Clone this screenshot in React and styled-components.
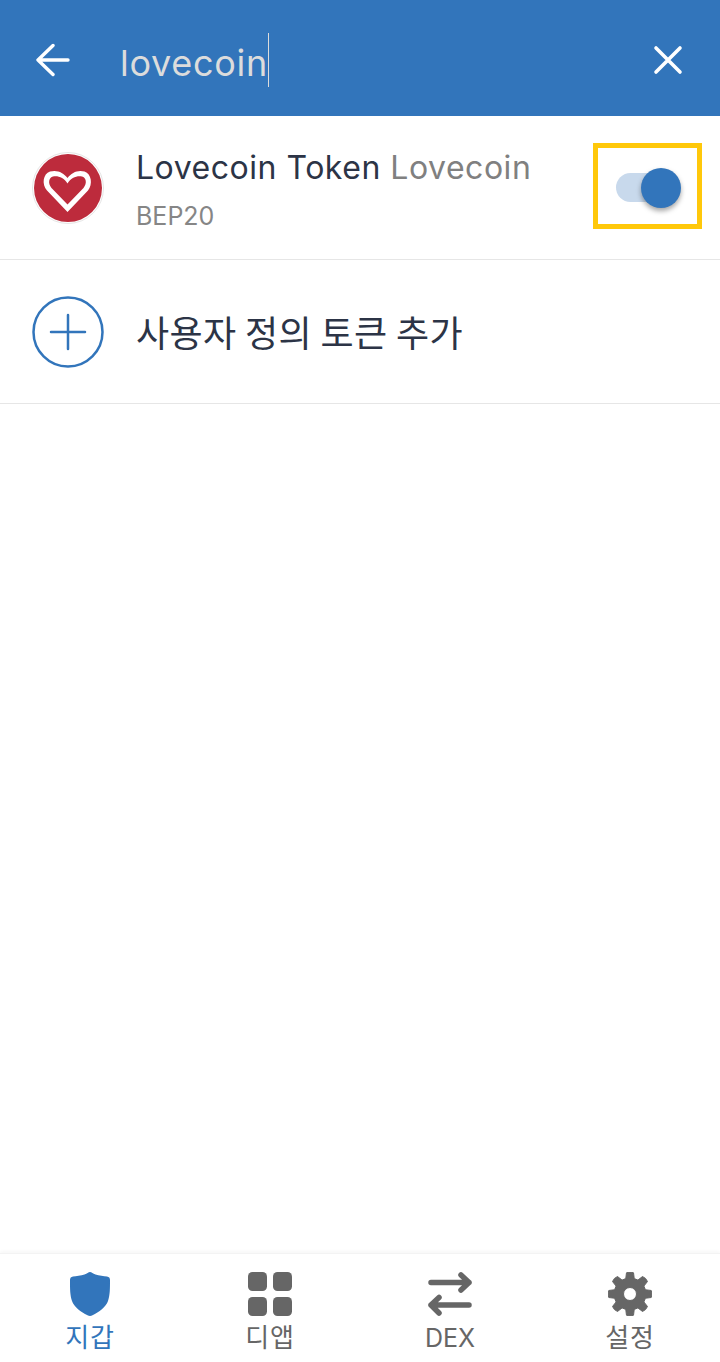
import React from 'react'
import styled, { createGlobalStyle } from 'styled-components'

const BLUE = '#3275bb'
const LATIN = `Inter, "Noto Sans CJK KR", sans-serif`

const GlobalStyle = createGlobalStyle`
  html, body { margin: 0; padding: 0; background: #fff; }
  body { font-family: ${LATIN}; }
`

const Page = styled.div`
  display: flex;
  flex-direction: column;
  width: 720px;
  height: 1362px;
  overflow: hidden;
  background: #fff;
`

const Header = styled.header`
  display: flex;
  align-items: center;
  flex: none;
  height: 116px;
  padding: 4px 36px 0;
  box-sizing: border-box;
  background: ${BLUE};
`

const HeaderIcon = styled.svg`
  flex: none;
  display: block;
  color: #fff;
`

const SearchText = styled.div`
  flex: 1;
  display: flex;
  align-items: center;
  height: 54px;
  margin-left: 50px;
  font-size: 36px;
  letter-spacing: 0.7px;
  color: #dcdcdc;
`

const SearchValue = styled.span`
  padding-top: 6px;
`

const Caret = styled.span`
  width: 1px;
  height: 54px;
  background: #dcdcdc;
`

const Row = styled.div`
  display: flex;
  align-items: center;
  flex: none;
  height: 144px;
  padding-left: 32px;
  box-sizing: border-box;
  border-bottom: 1px solid #e6e6e6;
`

const RowLogo = styled.svg`
  flex: none;
  display: block;
  margin-right: 32px;
`

const TokenInfo = styled.div`
  flex: 1;
  display: flex;
  flex-direction: column;
  gap: 14px;
  padding-top: 4px;
`

const TokenName = styled.div`
  font-size: 32px;
  line-height: 38px;
  letter-spacing: 0.52px;
  color: #2c3446;
`

const TokenSymbol = styled.span`
  color: #808080;
`

const TokenNetwork = styled.div`
  font-size: 25px;
  line-height: 30px;
  color: #868686;
`

const Highlight = styled.div`
  flex: none;
  display: flex;
  align-items: center;
  width: 109px;
  height: 86px;
  margin: 0 18px 4px 0;
  padding-left: 18px;
  box-sizing: border-box;
  border: 5px solid #ffc80a;
`

const ToggleTrack = styled.div`
  position: relative;
  width: 50px;
  height: 29px;
  margin-top: 4px;
  border-radius: 15px;
  background: #c8d9ec;
`

const ToggleKnob = styled.div`
  position: absolute;
  top: -5px;
  right: -15px;
  width: 40px;
  height: 40px;
  border-radius: 50%;
  background: ${BLUE};
  box-shadow: 0 3px 5px rgba(0, 0, 0, 0.35);
`

const AddLabel = styled.div`
  margin-top: -2px;
  font-family: "Noto Sans CJK KR", sans-serif;
  font-size: 36px;
  letter-spacing: 0.4px;
  color: #2c3446;
`

const Spacer = styled.div`
  flex: 1;
`

const TabBar = styled.nav`
  display: grid;
  grid-template-columns: repeat(4, 180px);
  flex: none;
  height: 109px;
  box-sizing: border-box;
  padding-top: 18px;
  border-top: 1px solid #f3f3f3;
  box-shadow: 0 -2px 3px rgba(0, 0, 0, 0.03);
`

const Tab = styled.div`
  display: flex;
  flex-direction: column;
  align-items: center;
  color: ${p => (p.$active ? BLUE : '#666666')};
`

const TabIcon = styled.svg`
  display: block;
  fill: ${p => (p.$outline ? 'none' : 'currentColor')};
`

const TabLabel = styled.span`
  margin-top: 4px;
  font-size: ${p => (p.$latin ? '25px' : '26px')};
  letter-spacing: ${p => (p.$latin ? '0' : '0.8px')};
  line-height: 36px;
`

const BackIcon = () => (
  <HeaderIcon width="34" height="34" viewBox="0 0 34 34" fill="none" stroke="currentColor" strokeWidth="3.4" strokeLinecap="round" strokeLinejoin="round">
    <path d="M2 17H32M17 2.5 2 17l15 14.5" />
  </HeaderIcon>
)

const CloseIcon = () => (
  <HeaderIcon width="32" height="32" viewBox="0 0 32 32" fill="none" stroke="currentColor" strokeWidth="3.6" strokeLinecap="round">
    <path d="M4 4 28 28M28 4 4 28" />
  </HeaderIcon>
)

const HeartLogo = () => (
  <RowLogo width="72" height="72" viewBox="0 0 72 72">
    <circle cx="36" cy="36" r="35.5" fill="#fff" stroke="#e4e4e4" />
    <circle cx="36" cy="36" r="34" fill="#bd2b3c" />
    <path
      d="M35.500 60 15 38.500C9.500 32 11 22 18 19.500C25 17.500 31.500 20.500 35.500 26C39.500 20.500 46 17.500 52.500 19.500C59.500 22 61 32 56 38.500Z"
      fill="#fff"
    />
    <path
      d="M35.500 52.500 19.500 36C15.500 31 17 25.500 21 24.500C26 23.500 32 25.500 35.500 31.500C39 25.500 45 23.500 50 24.500C54 25.500 55.500 31 51.500 36Z"
      fill="#bd2b3c"
    />
  </RowLogo>
)

const AddIcon = () => (
  <RowLogo width="72" height="72" viewBox="0 0 72 72" fill="none" stroke={BLUE}>
    <circle cx="36" cy="36" r="34.500" strokeWidth="2.500" />
    <path d="M36 19V53M19 36H53" strokeWidth="2.500" strokeLinecap="round" />
  </RowLogo>
)

const ShieldIcon = () => (
  <TabIcon width="44" height="44" viewBox="0 0 44 44">
    <path d="M22 0c1.500 0 3 1.500 5.500 2.500C31 3.800 36 4 39 4.500c2 .3 3 1.500 3 3.500 0 9 0 15-2 21-2 6-9 11-15.500 14.300-1.600.8-3.400.8-5 0C13 40 6 35 4 29 2 23 2 17 2 8c0-2 1-3.200 3-3.500C8 4 13 3.800 16.500 2.500 19 1.500 20.500 0 22 0z" />
  </TabIcon>
)

const GridIcon = () => (
  <TabIcon width="44" height="44" viewBox="0 0 44 44">
    <rect x="0" y="0" width="19" height="19" rx="4.500" />
    <rect x="25" y="0" width="19" height="19" rx="4.500" />
    <rect x="0" y="25" width="19" height="19" rx="4.500" />
    <rect x="25" y="25" width="19" height="19" rx="4.500" />
  </TabIcon>
)

const SwapIcon = () => (
  <TabIcon $outline width="44" height="44" viewBox="0 0 44 44" stroke="currentColor" strokeWidth="5.500" strokeLinecap="round" strokeLinejoin="round">
    <path d="M3 10.500H41M33 3l8 7.500L33 18M41 33H3M11 25.500 3 33l8 8" />
  </TabIcon>
)

const gearPath = (() => {
  // eight teeth round the ring, hole cut with evenodd
  const pts = []
  const cx = 22
  const cy = 22
  for (let i = 0; i < 8; i++) {
    const a = (i * Math.PI) / 4 - Math.PI / 2
    const step = Math.PI / 8
    const add = (r, t) => pts.push(`${(cx + r * Math.cos(t)).toFixed(2)} ${(cy + r * Math.sin(t)).toFixed(2)}`)
    add(16, a - step * 0.68)
    add(21.500, a - step * 0.42)
    add(22, a)
    add(21.500, a + step * 0.42)
    add(16, a + step * 0.68)
  }
  return `M${pts.join('L')}Z M22 15.500a6.500 6.500 0 1 0 0 13a6.500 6.500 0 1 0 0-13Z`
})()

const GearIcon = () => (
  <TabIcon width="44" height="44" viewBox="0 0 44 44">
    <path d={gearPath} fillRule="evenodd" stroke="currentColor" strokeWidth="1" strokeLinejoin="round" />
  </TabIcon>
)

export default function App() {
  return (
    <Page>
      <GlobalStyle />
      <Header>
        <BackIcon />
        <SearchText>
          <SearchValue>lovecoin</SearchValue>
          <Caret />
        </SearchText>
        <CloseIcon />
      </Header>
      <Row>
        <HeartLogo />
        <TokenInfo>
          <TokenName>
            Lovecoin Token <TokenSymbol>Lovecoin</TokenSymbol>
          </TokenName>
          <TokenNetwork>BEP20</TokenNetwork>
        </TokenInfo>
        <Highlight>
          <ToggleTrack>
            <ToggleKnob />
          </ToggleTrack>
        </Highlight>
      </Row>
      <Row>
        <AddIcon />
        <AddLabel>사용자 정의 토큰 추가</AddLabel>
      </Row>
      <Spacer />
      <TabBar>
        <Tab $active>
          <ShieldIcon />
          <TabLabel>지갑</TabLabel>
        </Tab>
        <Tab>
          <GridIcon />
          <TabLabel>디앱</TabLabel>
        </Tab>
        <Tab>
          <SwapIcon />
          <TabLabel $latin>DEX</TabLabel>
        </Tab>
        <Tab>
          <GearIcon />
          <TabLabel>설정</TabLabel>
        </Tab>
      </TabBar>
    </Page>
  )
}
